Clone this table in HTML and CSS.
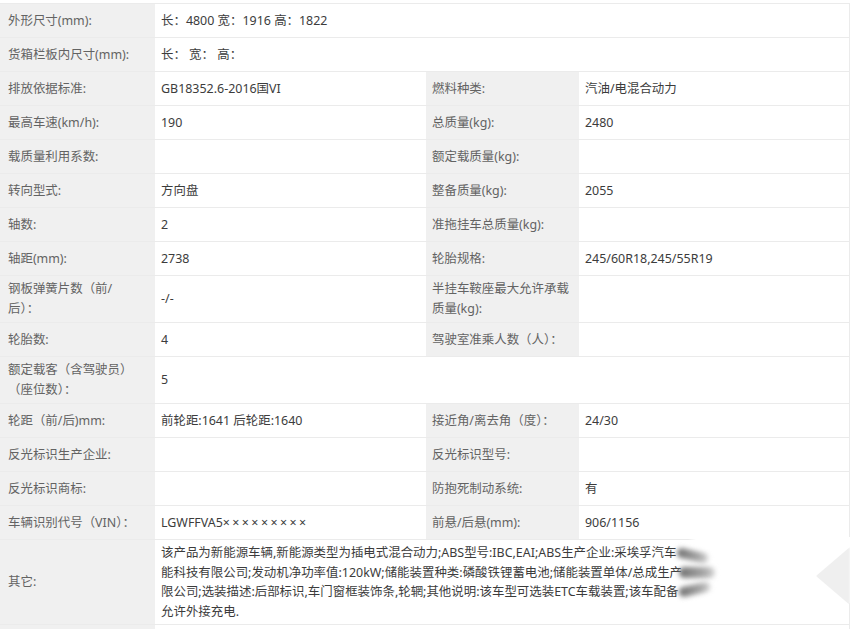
FILE: index.html
```html
<!DOCTYPE html>
<html lang="zh-CN">
<head>
<meta charset="utf-8">
<title>车辆参数</title>
<link rel="stylesheet" href="styles.css">
</head>
<body>
<div class="spec">
  <div class="row">
    <div class="cell label first">外形尺寸(mm):</div>
    <div class="cell value wide">长：4800 宽：1916 高：1822</div>
  </div>
  <div class="row">
    <div class="cell label first">货箱栏板内尺寸(mm):</div>
    <div class="cell value wide">长：&nbsp;宽：&nbsp;高：</div>
  </div>
  <div class="row">
    <div class="cell label first">排放依据标准:</div>
    <div class="cell value">GB18352.6-2016国VI</div>
    <div class="cell label">燃料种类:</div>
    <div class="cell value">汽油/电混合动力</div>
  </div>
  <div class="row">
    <div class="cell label first">最高车速(km/h):</div>
    <div class="cell value">190</div>
    <div class="cell label">总质量(kg):</div>
    <div class="cell value">2480</div>
  </div>
  <div class="row">
    <div class="cell label first">载质量利用系数:</div>
    <div class="cell value"></div>
    <div class="cell label">额定载质量(kg):</div>
    <div class="cell value"></div>
  </div>
  <div class="row">
    <div class="cell label first">转向型式:</div>
    <div class="cell value">方向盘</div>
    <div class="cell label">整备质量(kg):</div>
    <div class="cell value">2055</div>
  </div>
  <div class="row">
    <div class="cell label first">轴数:</div>
    <div class="cell value">2</div>
    <div class="cell label">准拖挂车总质量(kg):</div>
    <div class="cell value"></div>
  </div>
  <div class="row">
    <div class="cell label first">轴距(mm):</div>
    <div class="cell value">2738</div>
    <div class="cell label">轮胎规格:</div>
    <div class="cell value">245/60R18,245/55R19</div>
  </div>
  <div class="row">
    <div class="cell label first">钢板弹簧片数（前/后）：</div>
    <div class="cell value">-/-</div>
    <div class="cell label">半挂车鞍座最大允许承载质量(kg):</div>
    <div class="cell value"></div>
  </div>
  <div class="row">
    <div class="cell label first">轮胎数:</div>
    <div class="cell value">4</div>
    <div class="cell label">驾驶室准乘人数（人）：</div>
    <div class="cell value"></div>
  </div>
  <div class="row">
    <div class="cell label first">额定载客（含驾驶员）（座位数）：</div>
    <div class="cell value wide">5</div>
  </div>
  <div class="row">
    <div class="cell label first">轮距（前/后)mm:</div>
    <div class="cell value">前轮距:1641 后轮距:1640</div>
    <div class="cell label">接近角/离去角（度）：</div>
    <div class="cell value">24/30</div>
  </div>
  <div class="row">
    <div class="cell label first">反光标识生产企业:</div>
    <div class="cell value"></div>
    <div class="cell label">反光标识型号:</div>
    <div class="cell value"></div>
  </div>
  <div class="row">
    <div class="cell label first">反光标识商标:</div>
    <div class="cell value"></div>
    <div class="cell label">防抱死制动系统:</div>
    <div class="cell value">有</div>
  </div>
  <div class="row">
    <div class="cell label first">车辆识别代号（VIN）：</div>
    <div class="cell value">LGWFFVA5<span class="masked">×××××××××</span></div>
    <div class="cell label">前悬/后悬(mm):</div>
    <div class="cell value">906/1156</div>
  </div>
  <div class="row">
    <div class="cell label first">其它:</div>
    <div class="cell value wide other">
      <div class="other-text">该产品为新能源车辆,新能源类型为插电式混合动力;ABS型号:IBC,EAI;ABS生产企业:采埃孚汽车<br>能科技有限公司;发动机净功率值:120kW;储能装置种类:磷酸铁锂蓄电池;储能装置单体/总成生产<br>限公司;选装描述:后部标识,车门窗框装饰条,轮辋;其他说明:该车型可选装ETC车载装置;该车配备<br>允许外接充电.</div>
      <div class="mask"></div>
      <div class="smear smear-a"></div>
      <div class="smear smear-b"></div>
      <div class="smear smear-c"></div>
      <div class="wedge"></div>
    </div>
  </div>
  <div class="row">
    <div class="cell label first"></div>
    <div class="cell value wide"></div>
  </div>
</div>
</body>
</html>
```

FILE: styles.css
```css
html, body {
  margin: 0;
  padding: 0;
  background: #ffffff;
}

body {
  font-family: "Noto Sans", "Noto Sans CJK SC", sans-serif;
  font-size: 12.45px;
  color: #3c3c3c;
}

.spec {
  margin-top: 3px;
  width: 849px;
  border-top: 1px solid #ebebeb;
  border-right: 1px solid #ebebeb;
}

.row {
  display: grid;
  grid-template-columns: 155px 271px 153px 270px;
  min-height: 34px;
  box-sizing: border-box;
  border-bottom: 1px solid #ebebeb;
}

.cell {
  display: flex;
  align-items: center;
  padding: 3px 6px;
  line-height: 20px;
  min-width: 0;
}

.label {
  background: #f0f0f0;
  color: #636363;
}

.label.first {
  padding-left: 8px;
  padding-right: 16px;
}

.value {
  background: #ffffff;
  padding-left: 6px;
}

.masked {
  letter-spacing: 2.4px;
}

.wide {
  grid-column: span 3;
}

.other {
  position: relative;
  line-height: 19.5px;
}

.other-text {
  white-space: nowrap;
}

.mask {
  position: absolute;
  left: 533px;
  top: -3px;
  right: -2px;
  height: 66px;
  background: linear-gradient(to right, rgba(255,255,255,0) 0, #ffffff 8px);
}

.smear {
  position: absolute;
  background: linear-gradient(to right, #6f6f6f, #a8a8a8 70%, #d6d6d6);
  filter: blur(2.5px);
  border-radius: 6px;
}

.smear-a {
  left: 522px;
  top: 7px;
  width: 32px;
  height: 10px;
  transform: rotate(13deg);
  transform-origin: left center;
}

.smear-b {
  left: 524px;
  top: 27px;
  width: 36px;
  height: 11px;
}

.smear-c {
  left: 524px;
  top: 48px;
  width: 32px;
  height: 10px;
  transform: rotate(-13deg);
  transform-origin: left center;
}

.wedge {
  position: absolute;
  right: -1px;
  top: 7px;
  width: 34px;
  height: 58px;
  background: #efefef;
  clip-path: polygon(100% 0, 0 50%, 100% 100%);
  filter: blur(1px);
}
```
